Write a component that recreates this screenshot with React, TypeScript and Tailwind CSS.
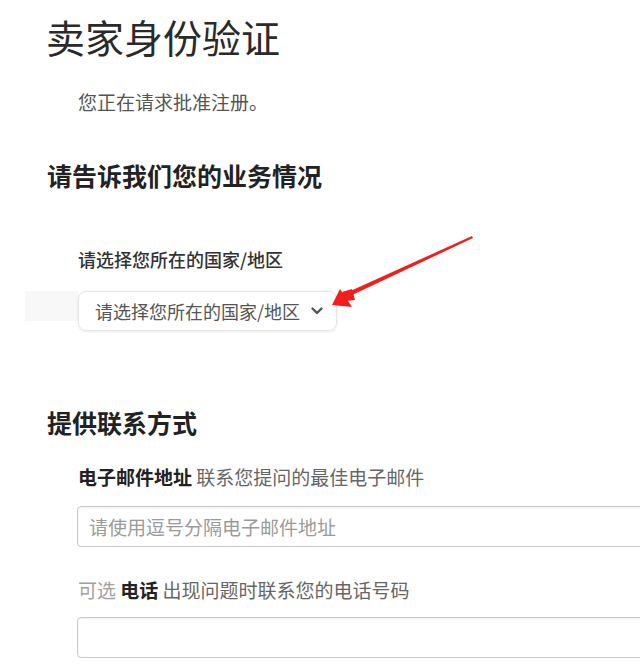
import React from "react";

export default function App() {
  const font = { fontFamily: '"Noto Sans CJK SC", "Noto Sans", sans-serif' };
  return (
    <div
      className="relative w-[640px] h-[667px] overflow-hidden bg-white text-[#222]"
      style={font}
    >
      <div className="flex flex-col pt-[17px]">
        <h1 className="ml-[46px] text-[39px] leading-none font-normal text-[#2a2a2a]">
          卖家身份验证
        </h1>
        <p className="ml-[78px] mt-[36px] text-[19px] leading-none text-[#555]">
          您正在请求批准注册。
        </p>
        <h2 className="ml-[47px] mt-[52px] text-[25px] leading-none font-bold text-[#222]">
          请告诉我们您的业务情况
        </h2>
        <div className="ml-[78px] mt-[62px] text-[18px] leading-none font-medium text-[#333]">
          请选择您所在的国家/地区
        </div>
        <div className="mt-[23px] flex items-start">
          <div className="ml-[25px] w-[53px] h-[30px] bg-[#f8f8f8]" />
          <div className="w-[259px] h-[40px] rounded-[8px] border border-[#e6e6e6] shadow-[0_1px_3px_rgba(0,0,0,0.08)] flex items-center pl-[16px] pr-[12px] justify-between">
            <span className="text-[18px] leading-none text-[#555]">请选择您所在的国家/地区</span>
            <svg width="12" height="8" viewBox="0 0 12 8" className="mr-[1px]">
              <path d="M1.5 1.5 L6 6 L10.5 1.5" fill="none" stroke="#555" strokeWidth="2.4" strokeLinecap="round" strokeLinejoin="round" />
            </svg>
          </div>
        </div>
        <h2 className="ml-[47px] mt-[79px] text-[25px] leading-none font-bold text-[#222]">
          提供联系方式
        </h2>
        <div className="ml-[78px] mt-[32px] text-[19px] leading-none text-[#666]">
          <span className="font-bold text-[#222]">电子邮件地址</span> 联系您提问的最佳电子邮件
        </div>
        <div className="ml-[77px] mt-[20px] w-[600px] h-[41px] rounded-[4px] border border-[#c9c9c9] shadow-[inset_0_1px_2px_rgba(0,0,0,0.08)] flex items-center pl-[11px]">
          <span className="text-[19px] leading-none text-[#9a9a9a]">请使用逗号分隔电子邮件地址</span>
        </div>
        <div className="ml-[78px] mt-[33px] text-[19px] leading-none text-[#666]">
          <span className="text-[#a0a0a0]">可选</span> <span className="font-bold text-[#222]">电话</span> 出现问题时联系您的电话号码
        </div>
        <div className="ml-[77px] mt-[18px] w-[600px] h-[41px] rounded-[4px] border border-[#c9c9c9] shadow-[inset_0_1px_2px_rgba(0,0,0,0.08)]" />
      </div>
      <svg
        className="absolute left-0 top-0 pointer-events-none"
        width="640"
        height="667"
        viewBox="0 0 640 667"
      >
        <polygon points="472,236 473,238 350,296 346,293" fill="#f21d1d" />
        <polygon points="332,305 340,289 352,307" fill="#f21d1d" />
        <polygon points="342,292 352,289 355,300 346,301" fill="#f21d1d" />
      </svg>
    </div>
  );
}
